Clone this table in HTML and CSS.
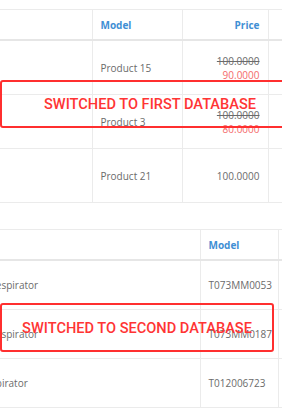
FILE: index.html
```html
<!DOCTYPE html>
<html>
<head>
<title>Products</title>
<link rel="stylesheet" href="styles.css">
</head>
<body>

<div class="panel panel-first">
<table class="list list-first">
	<colgroup>
		<col class="c-name1"><col class="c-model1"><col class="c-price"><col class="c-rest">
	</colgroup>
	<thead>
		<tr><th></th><th>Model</th><th class="right">Price</th><th></th></tr>
	</thead>
	<tbody>
		<tr><td></td><td>Product 15</td><td class="right"><span class="old">100.0000</span><br><span class="special">90.0000</span></td><td></td></tr>
		<tr><td></td><td>Product 3</td><td class="right"><span class="old">100.0000</span><br><span class="special">80.0000</span></td><td></td></tr>
		<tr><td></td><td>Product 21</td><td class="right">100.0000</td><td></td></tr>
	</tbody>
</table>
<div class="notice notice-first">SWITCHED TO FIRST DATABASE</div>
</div>

<div class="panel panel-second">
<table class="list list-second">
	<colgroup>
		<col class="c-name2"><col class="c-model2"><col class="c-rest">
	</colgroup>
	<thead>
		<tr><th></th><th>Model</th><th></th></tr>
	</thead>
	<tbody>
		<tr><td class="name">Half Face Particulate Respirator</td><td>T073MM0053</td><td></td></tr>
		<tr><td class="name">Half Face Particulate Respirator</td><td>T073MM0187</td><td></td></tr>
		<tr><td class="name">Disposable Valved Respirator</td><td>T012006723</td><td></td></tr>
	</tbody>
</table>
<div class="notice notice-second">SWITCHED TO SECOND DATABASE</div>
</div>

</body>
</html>
```

FILE: styles.css
```css
BODY {margin:0; background-color:white; color:#6b6b6b; font-family: "Open Sans", "Liberation Sans", sans-serif; font-size:10px; overflow:hidden;}

.panel {position:relative;}
.panel-first {padding-top:9px;}
.panel-second {padding-top:26px; margin-left:-116px;}

.list {border-collapse:collapse; table-layout:fixed; border-top:1px solid #ebebeb;}
.list-first {width:340px;}
.list-second {width:466px;}

.c-name1 {width:92px;}
.c-model1 {width:90px;}
.c-price {width:86px;}
.c-rest {width:72px;}
.c-name2 {width:316px;}
.c-model2 {width:78px;}

.list TH {height:29px; padding:0 8px; text-align:left; color:#3f8fd4; font-weight:bold; border-left:1px solid #ebebeb; border-bottom:2px solid #e6e6e6;}
.list TD {padding:0 8px; line-height:14px; white-space:nowrap; overflow:hidden; border-left:1px solid #ebebeb; border-bottom:1px solid #ebebeb;}
.list TH:first-child, .list TD:first-child {border-left:none;}
.list-first TD {height:53px;}
.list-second TD {height:48px;}

.right {text-align:right !important;}
.old {text-decoration:line-through;}
.special {color:#f46a6a;}

/* red callouts laid over the tables */
.notice {position:absolute; left:0; border:2px solid #ff2f2f; border-radius:3px; color:#ff3434; font-family: Roboto, "Liberation Sans", sans-serif; font-weight:500; font-size:14.6px; display:flex; align-items:center; justify-content:center;}
.notice-first {top:80px; width:296px; height:44px;}
.notice-second {top:100px; left:116px; width:270px; height:45px;}
```
